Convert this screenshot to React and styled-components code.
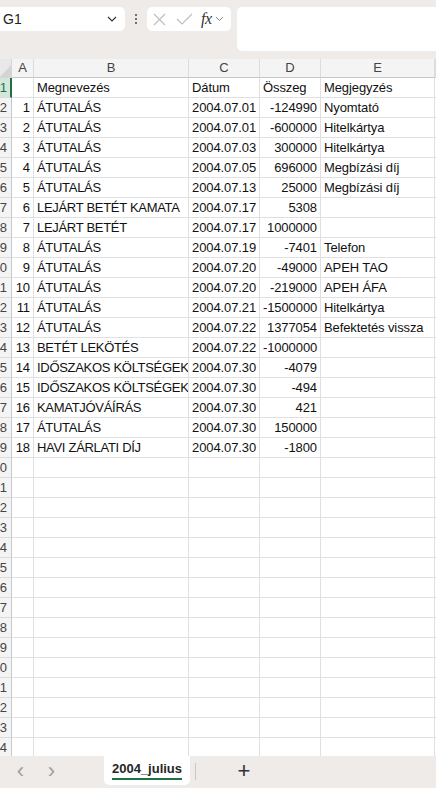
import React from "react";
import styled, { createGlobalStyle } from "styled-components";

const GlobalStyle = createGlobalStyle`
  html, body {
    margin: 0;
    padding: 0;
    background: #ffffff;
  }
  body {
    font-family: "Liberation Sans", Arial, sans-serif;
    overflow: hidden;
  }
`;

const rows = [
  [1, "ÁTUTALÁS", "2004.07.01", "-124990", "Nyomtató"],
  [2, "ÁTUTALÁS", "2004.07.01", "-600000", "Hitelkártya"],
  [3, "ÁTUTALÁS", "2004.07.03", "300000", "Hitelkártya"],
  [4, "ÁTUTALÁS", "2004.07.05", "696000", "Megbízási díj"],
  [5, "ÁTUTALÁS", "2004.07.13", "25000", "Megbízási díj"],
  [6, "LEJÁRT BETÉT KAMATA", "2004.07.17", "5308", ""],
  [7, "LEJÁRT BETÉT", "2004.07.17", "1000000", ""],
  [8, "ÁTUTALÁS", "2004.07.19", "-7401", "Telefon"],
  [9, "ÁTUTALÁS", "2004.07.20", "-49000", "APEH TAO"],
  [10, "ÁTUTALÁS", "2004.07.20", "-219000", "APEH ÁFA"],
  [11, "ÁTUTALÁS", "2004.07.21", "-1500000", "Hitelkártya"],
  [12, "ÁTUTALÁS", "2004.07.22", "1377054", "Befektetés vissza"],
  [13, "BETÉT LEKÖTÉS", "2004.07.22", "-1000000", ""],
  [14, "IDŐSZAKOS KÖLTSÉGEK", "2004.07.30", "-4079", ""],
  [15, "IDŐSZAKOS KÖLTSÉGEK", "2004.07.30", "-494", ""],
  [16, "KAMATJÓVÁÍRÁS", "2004.07.30", "421", ""],
  [17, "ÁTUTALÁS", "2004.07.30", "150000", ""],
  [18, "HAVI ZÁRLATI DÍJ", "2004.07.30", "-1800", ""],
];

const TOTAL_ROWS = 35;
const COLS = "12px 22px 155px 71px 61px 114px 1fr";

const App = () => {
  const body = [];
  for (let r = 1; r <= TOTAL_ROWS; r++) {
    let cells = ["", "", "", "", ""];
    if (r === 1) cells = ["", "Megnevezés", "Dátum", "Összeg", "Megjegyzés"];
    else if (rows[r - 2]) cells = rows[r - 2];
    body.push(
      <Row key={r}>
        <RowHead $active={r === 1}>
          <span>{r}</span>
        </RowHead>
        <Cell $num>{cells[0]}</Cell>
        <Cell $tight={r !== 1}>{cells[1]}</Cell>
        <Cell>{cells[2]}</Cell>
        <Cell $num={r !== 1}>{cells[3]}</Cell>
        <Cell>{cells[4]}</Cell>
        <Cell />
      </Row>
    );
  }

  return (
    <Page>
      <GlobalStyle />
      <Toolbar>
        <NameBox>
          <span>G1</span>
          <svg width="10" height="6" viewBox="0 0 10 6">
            <path d="M1 1l4 4 4-4" fill="none" stroke="#333" strokeWidth="1.2" />
          </svg>
        </NameBox>
        <Dots>
          <i />
          <i />
          <i />
        </Dots>
        <FxBox>
          <svg width="13" height="13" viewBox="0 0 13 13">
            <path d="M1 1l11 11M12 1L1 12" stroke="#bdbdbd" strokeWidth="1.1" />
          </svg>
          <svg width="17" height="12" viewBox="0 0 17 12">
            <path d="M1 6l5 5L16 1" fill="none" stroke="#bdbdbd" strokeWidth="1.1" />
          </svg>
          <FxLabel>fx</FxLabel>
          <svg width="9" height="6" viewBox="0 0 9 6">
            <path d="M1 1l3.5 3.5L8 1" fill="none" stroke="#888" strokeWidth="1" />
          </svg>
        </FxBox>
        <FormulaInput />
      </Toolbar>

      <Sheet>
        <HeaderRow>
          <Corner>
            <svg width="12" height="19" viewBox="0 0 12 19">
              <path d="M12 5v13H0z" fill="#d4d4d4" />
            </svg>
          </Corner>
          {["A", "B", "C", "D", "E", ""].map((c, i) => (
            <ColHead key={i}>{c}</ColHead>
          ))}
        </HeaderRow>
        {body}
      </Sheet>

      <TabBar>
        <NavArrow>‹</NavArrow>
        <NavArrow>›</NavArrow>
        <SheetTab>
          <span>2004_julius</span>
        </SheetTab>
        <TabDivider />
        <AddTab>+</AddTab>
      </TabBar>
    </Page>
  );
};

export default App;

const Page = styled.div`
  width: 436px;
  height: 788px;
  display: flex;
  flex-direction: column;
  overflow: hidden;
`;

const Toolbar = styled.div`
  height: 59px;
  flex-shrink: 0;
  background: #eeebe8;
  display: flex;
  align-items: flex-start;
  padding-top: 7px;
  box-sizing: border-box;
`;

const NameBox = styled.div`
  width: 125px;
  height: 24px;
  background: #ffffff;
  border-radius: 0 5px 5px 0;
  display: flex;
  align-items: center;
  justify-content: space-between;
  padding: 0 8px 0 3px;
  box-sizing: border-box;
  font-size: 14px;
  color: #222;
`;

const Dots = styled.div`
  width: 22px;
  height: 24px;
  display: flex;
  flex-direction: column;
  align-items: center;
  justify-content: center;
  gap: 2px;

  i {
    width: 2px;
    height: 2px;
    background: #444;
    border-radius: 50%;
  }
`;

const FxBox = styled.div`
  width: 84px;
  height: 24px;
  background: #ffffff;
  border-radius: 5px;
  display: flex;
  align-items: center;
  padding: 0 4px 0 6px;
  box-sizing: border-box;

  svg:first-child {
    margin-right: 10px;
  }
  svg:nth-child(2) {
    margin-right: 8px;
  }
`;

const FxLabel = styled.span`
  font-family: "Liberation Serif", "Times New Roman", serif;
  font-style: italic;
  font-size: 16px;
  color: #333;
  margin-right: 3px;
  letter-spacing: -0.5px;
`;

const FormulaInput = styled.div`
  flex: 1;
  height: 44px;
  margin-left: 6px;
  background: #ffffff;
  border-radius: 5px 0 0 5px;
`;

const Sheet = styled.div`
  flex: 1;
  overflow: hidden;
  background: #ffffff;
`;

const HeaderRow = styled.div`
  display: grid;
  grid-template-columns: ${COLS};
  height: 19px;
`;

const Corner = styled.div`
  background: #e8e8e8;
  border-right: 1px solid #d6d6d6;
  border-bottom: 1px solid #d6d6d6;
  box-sizing: border-box;
  overflow: hidden;
  line-height: 0;
`;

const ColHead = styled.div`
  background: #f4f4f4;
  border-right: 1px solid #dcdcdc;
  border-bottom: 1px solid #c8c8c8;
  box-sizing: border-box;
  font-size: 13px;
  color: #444;
  text-align: center;
  line-height: 18px;
`;

const Row = styled.div`
  display: grid;
  grid-template-columns: ${COLS};
  height: 20px;
`;

const RowHead = styled.div`
  display: flex;
  justify-content: flex-end;
  align-items: center;
  overflow: hidden;
  padding-right: ${(p) => (p.$active ? "3px" : "4px")};
  box-sizing: border-box;
  background: ${(p) => (p.$active ? "#d3e6da" : "#f4f4f4")};
  color: ${(p) => (p.$active ? "#1e7145" : "#444")};
  border-right: ${(p) => (p.$active ? "2px solid #1e7145" : "1px solid #c8c8c8")};
  border-bottom: 1px solid #dcdcdc;
  font-size: 13px;
  white-space: nowrap;

  span {
    flex-shrink: 0;
  }
`;

const Cell = styled.div`
  border-right: 1px solid #e0e0e0;
  border-bottom: 1px solid #e0e0e0;
  box-sizing: border-box;
  font-size: 13px;
  color: #111;
  line-height: 19px;
  padding: 0 3px;
  white-space: nowrap;
  overflow: hidden;
  letter-spacing: ${(p) => (p.$tight ? "-0.3px" : "-0.1px")};
  text-align: ${(p) => (p.$num ? "right" : "left")};
`;

const TabBar = styled.div`
  height: 32px;
  flex-shrink: 0;
  background: #eeebe8;
  display: flex;
  align-items: stretch;
`;

const NavArrow = styled.div`
  width: 31px;
  display: flex;
  align-items: center;
  justify-content: center;
  font-size: 22px;
  color: #a0a0a0;
  padding-bottom: 3px;

  &:first-child {
    margin-left: 5px;
  }
`;

const SheetTab = styled.div`
  margin-left: 37px;
  width: 86px;
  background: #ffffff;
  border-radius: 0 0 5px 5px;
  display: flex;
  align-items: center;
  justify-content: center;
  margin-bottom: 3px;

  span {
    font-size: 13px;
    font-weight: 700;
    color: #262626;
    padding-bottom: 2px;
    border-bottom: 2px solid #1e7145;
  }
`;

const TabDivider = styled.div`
  width: 1px;
  background: #c8c8c8;
  margin: 7px 0 8px 5px;
`;

const AddTab = styled.div`
  width: 96px;
  display: flex;
  align-items: center;
  justify-content: center;
  font-size: 22px;
  font-weight: 300;
  color: #333;
  padding-bottom: 3px;
`;
